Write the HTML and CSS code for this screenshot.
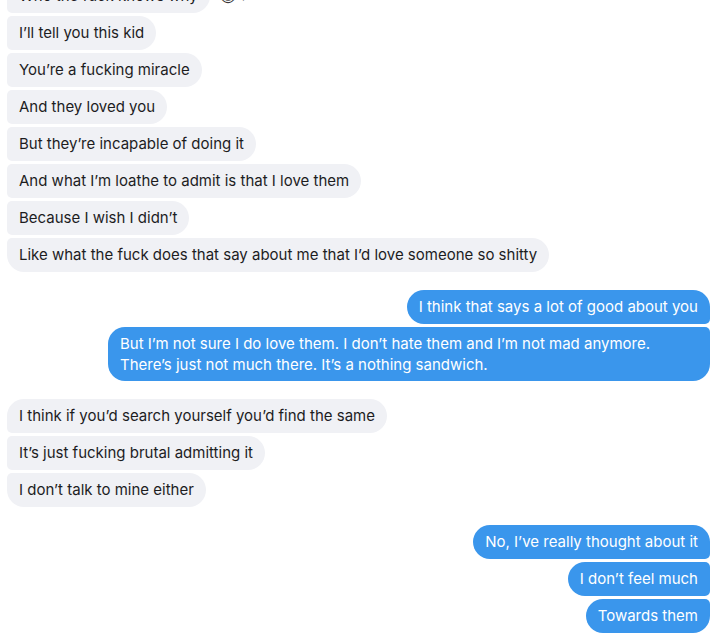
FILE: index.html
```html
<!DOCTYPE html>
<html>
<head>
<meta charset="utf-8">
<link rel="stylesheet" href="styles.css">
</head>
<body>
<div class="chat">
  <div class="group in">
    <div class="row"><div class="bubble">Who the fuck knows why</div><span class="react">☺ ›</span></div>
    <div class="row"><div class="bubble">I’ll tell you this kid</div></div>
    <div class="row"><div class="bubble">You’re a fucking miracle</div></div>
    <div class="row"><div class="bubble">And they loved you</div></div>
    <div class="row"><div class="bubble">But they’re incapable of doing it</div></div>
    <div class="row"><div class="bubble">And what I’m loathe to admit is that I love them</div></div>
    <div class="row"><div class="bubble">Because I wish I didn’t</div></div>
    <div class="row"><div class="bubble">Like what the fuck does that say about me that I’d love someone so shitty</div></div>
  </div>
  <div class="group out">
    <div class="row"><div class="bubble">I think that says a lot of good about you</div></div>
    <div class="row"><div class="bubble wide">But I’m not sure I do love them. I don’t hate them and I’m not mad anymore.<br>There’s just not much there. It’s a nothing sandwich.</div></div>
  </div>
  <div class="group in">
    <div class="row"><div class="bubble">I think if you’d search yourself you’d find the same</div></div>
    <div class="row"><div class="bubble">It’s just fucking brutal admitting it</div></div>
    <div class="row"><div class="bubble">I don’t talk to mine either</div></div>
  </div>
  <div class="group out">
    <div class="row"><div class="bubble">No, I’ve really thought about it</div></div>
    <div class="row"><div class="bubble">I don’t feel much</div></div>
    <div class="row"><div class="bubble">Towards them</div></div>
  </div>
</div>
</body>
</html>
```
FILE: styles.css
```css
html, body {
  margin: 0;
  padding: 0;
  background: #ffffff;
  overflow: hidden;
}
body {
  width: 720px;
  height: 643px;
  font-family: "Inter", "Liberation Sans", Arial, sans-serif;
  font-size: 15px;
}
.chat {
  display: flex;
  flex-direction: column;
  gap: 18px;
  padding: 0 10px 0 7px;
  margin-top: -21px;
}
.group {
  display: flex;
  flex-direction: column;
  gap: 3px;
}
.row {
  display: flex;
  align-items: center;
}
.out .row {
  justify-content: flex-end;
}
.bubble {
  padding: 6px 12px;
  line-height: 22px;
  border-radius: 17px;
}
.in .bubble {
  background: #f0f1f5;
  color: #1d1d1f;
  border-top-left-radius: 5px;
  border-bottom-left-radius: 5px;
}
.in .row:first-child .bubble { border-top-left-radius: 17px; }
.in .row:last-child .bubble { border-bottom-left-radius: 17px; }
.out .bubble {
  background: #3a96ec;
  color: #ffffff;
  border-top-right-radius: 5px;
  border-bottom-right-radius: 5px;
}
.out .row:first-child .bubble { border-top-right-radius: 17px; }
.out .row:last-child .bubble { border-bottom-right-radius: 17px; }
.wide {
  width: 602px;
  box-sizing: border-box;
  padding: 6px 12px;
  line-height: 21px;
}
.react {
  margin-left: 10px;
  font-family: "DejaVu Sans", sans-serif;
  font-size: 16px;
  color: #3a3a3a;
}
```
